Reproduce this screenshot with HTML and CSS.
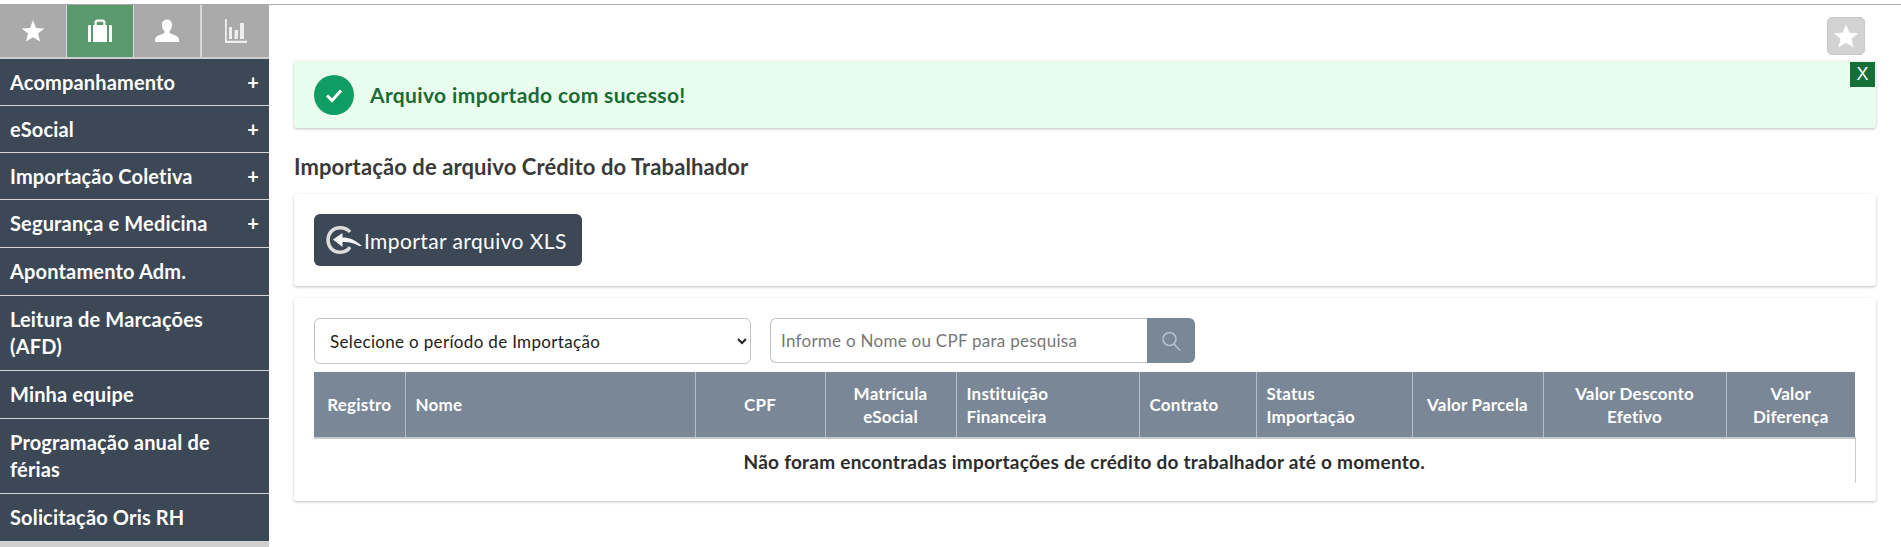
FILE: index.html
```html
<!DOCTYPE html>
<html lang="pt-BR">
<head>
  <meta charset="UTF-8" />
  <title>Importação de arquivo Crédito do Trabalhador</title>
  <link rel="stylesheet" href="styles.css">
</head>
<body>
  <div class="page">
    <aside class="sidebar">
      <div class="tabs">
        <div class="tab">
          <svg width="24" height="24" viewBox="0 0 24 24"><path fill="#fff" d="M12 1.200l3.100 7.700 8.200.5-6.300 5.200 2 8-7-4.400-7 4.400 2-8L.7 9.400l8.200-.5z"/></svg>
        </div>
        <div class="tab tab-active">
          <svg width="24" height="24" viewBox="0 0 24 24"><path fill="#fff" d="M0 7.500c0-.8.5-1.400 1.200-1.400H3v17H1.200C.5 23.100 0 22.500 0 21.700zM5 6.100h1.500V3.400C6.500 1.700 7.700.5 9.400.5h5.200c1.700 0 2.900 1.200 2.900 2.900v2.700H19v17H5zm3.700 0h6.600V3.700c0-.6-.4-1-1-1H9.700c-.6 0-1 .4-1 1zM21 6.100h1.800c.7 0 1.200.6 1.200 1.400v14.200c0 .8-.5 1.400-1.200 1.400H21z"/></svg>
        </div>
        <div class="tab">
          <svg width="24" height="24" viewBox="0 0 24 24"><path fill="#fff" d="M12 .5c3.200 0 5 2.300 5 5.500 0 2.400-.9 4.700-2.200 6-.6.600-.5 1.700.3 2.200 2.700 1.500 8.900 2.500 8.900 6.600v2.200H0v-2.200c0-4.100 6.200-5.100 8.900-6.600.8-.5.9-1.600.3-2.200C7.900 10.700 7 8.400 7 6c0-3.200 1.800-5.500 5-5.500z"/></svg>
        </div>
        <div class="tab">
          <svg width="22" height="24" viewBox="0 0 22 24"><path fill="#eee" d="M0 0h1.800v21.800H22V24H0zM4 8h3v12H4zM9.500 11H13v9H9.500zM15 4h4v16h-4z"/></svg>
        </div>
      </div>
      <nav class="menu">
        <a class="menu-item menu-item-short">Acompanhamento<span class="plus">+</span></a>
        <a class="menu-item menu-item-short">eSocial<span class="plus">+</span></a>
        <a class="menu-item menu-item-short">Importação Coletiva<span class="plus">+</span></a>
        <a class="menu-item">Segurança e Medicina<span class="plus">+</span></a>
        <a class="menu-item">Apontamento Adm.</a>
        <a class="menu-item">Leitura de Marcações (AFD)</a>
        <a class="menu-item">Minha equipe</a>
        <a class="menu-item">Programação anual de férias</a>
        <a class="menu-item">Solicitação Oris RH</a>
      </nav>
    </aside>

    <main class="content">
      <div class="toolbar">
        <button class="fav-button">
          <svg width="26" height="26" viewBox="0 0 24 24"><path fill="#fff" d="M12 1.200l3.100 7.700 8.200.5-6.300 5.200 2 8-7-4.400-7 4.400 2-8L.7 9.400l8.200-.5z"/></svg>
        </button>
      </div>

      <div class="alert">
        <span class="alert-icon">
          <svg width="22" height="22" viewBox="0 0 22 22"><path fill="none" stroke="#fff" stroke-width="3" d="M4 11.500l5 5 9-10"/></svg>
        </span>
        <span class="alert-text">Arquivo importado com sucesso!</span>
        <button class="alert-close">X</button>
      </div>

      <h2 class="title">Importação de arquivo Crédito do Trabalhador</h2>

      <section class="card card-import">
        <button class="import-button">
          <svg width="36" height="28" viewBox="0 0 36 28"><path fill="none" stroke="#dcdcdc" stroke-width="3.500" d="M24 6C21.500 3 18 1.800 14 1.800 7 1.800 2 7 2 14s5 12.200 12 12.200c4 0 8-1.700 10-5"/><path fill="#f4f4f4" d="M7 13.500L16.500 7v4.500c7 0 12 2 19.500 8.500h-3c-5-3-10-4.300-16.500-4V21z"/></svg>
          Importar arquivo XLS
        </button>
      </section>

      <section class="card card-list">
        <div class="filters">
          <select class="period-select">
            <option>Selecione o período de Importação</option>
          </select>
          <div class="search">
            <input class="search-input" type="text" placeholder="Informe o Nome ou CPF para pesquisa">
            <button class="search-button">
              <svg width="22" height="22" viewBox="0 0 22 22"><circle cx="9.500" cy="9" r="6.500" fill="none" stroke="#b9c2cc" stroke-width="1.500"/><path fill="none" stroke="#b9c2cc" stroke-width="1.500" d="M14 14l6 6.500"/></svg>
            </button>
          </div>
        </div>
        <table class="grid">
          <thead>
            <tr>
              <th class="col-registro">Registro</th>
              <th class="col-nome left">Nome</th>
              <th class="col-cpf">CPF</th>
              <th class="col-matricula">Matrícula eSocial</th>
              <th class="col-instituicao left">Instituição<br>Financeira</th>
              <th class="col-contrato left">Contrato</th>
              <th class="col-status left">Status<br>Importação</th>
              <th class="col-parcela">Valor Parcela</th>
              <th class="col-desconto">Valor Desconto Efetivo</th>
              <th class="col-diferenca">Valor Diferença</th>
            </tr>
          </thead>
          <tbody>
            <tr>
              <td class="empty" colspan="10">Não foram encontradas importações de crédito do trabalhador até o momento.</td>
            </tr>
          </tbody>
        </table>
      </section>
    </main>
  </div>
</body>
</html>
```

FILE: styles.css
```css
:root {
  --slate: #3c4856;
  --header: #7a8797;
  --ui-font: 'Lato', 'Liberation Sans', sans-serif;
}

* {
  box-sizing: border-box;
  margin: 0;
  padding: 0;
}

html, body {
  height: 100%;
  overflow: hidden;
}

body {
  padding-top: 4px;
  background: #fff;
  font-family: var(--ui-font);
  color: #3a3a3a;
}

.page {
  display: flex;
  height: 100%;
  border-top: 1px solid #aaa;
}

/* sidebar */
.sidebar {
  width: 269px;
  flex-shrink: 0;
  background: #cfcfcf;
}

.tabs {
  display: flex;
  height: 52px;
  margin-bottom: 2px;
  background: #aaa;
}

.tab {
  width: 67px;
  display: flex;
  align-items: center;
  justify-content: center;
  border-right: 1px solid #d8d8d8;
}

.tab:last-child {
  border-right: none;
}

.tab:nth-child(3) {
  width: 68px;
  border-right-width: 2px;
}

.tab-active {
  background: #5a9a6e;
}

.menu-item {
  display: flex;
  justify-content: space-between;
  padding: 10px 10px;
  background: var(--slate);
  border-bottom: 1px solid #d5d5d5;
  color: #fff;
  font-size: 20px;
  font-weight: 700;
  letter-spacing: 0.16px;
  line-height: 27px;
}

.menu-item-short {
  padding-bottom: 9px;
}

.plus {
  font-size: 20px;
}

/* main area */
.content {
  flex: 1;
  padding: 0 25px;
}

.toolbar {
  display: flex;
  justify-content: flex-end;
  padding: 12px 11px 6px 0;
}

.fav-button {
  width: 38px;
  height: 38px;
  display: flex;
  align-items: center;
  justify-content: center;
  background: #d3d3d3;
  border: 1px solid #c8c8c8;
  border-radius: 5px;
}

.alert {
  position: relative;
  display: flex;
  align-items: center;
  gap: 16px;
  height: 67px;
  padding-left: 20px;
  background: #e9fdef;
  border-radius: 3px;
  box-shadow: 0 1px 3px rgba(0, 0, 0, 0.25);
}

.alert-icon {
  width: 40px;
  height: 40px;
  display: flex;
  align-items: center;
  justify-content: center;
  background: #0f9d63;
  border-radius: 50%;
}

.alert-text {
  color: #1a6b35;
  font-size: 21px;
  font-weight: 700;
  letter-spacing: 0.36px;
}

.alert-close {
  position: absolute;
  top: 1px;
  right: 1px;
  width: 25px;
  height: 25px;
  background: #157038;
  border: none;
  color: #fff;
  font-family: 'Liberation Sans', sans-serif;
  font-size: 18px;
}

.title {
  margin-top: 26px;
  font-size: 22px;
  font-weight: 700;
  letter-spacing: 0.1px;
  line-height: 26px;
}

.card {
  background: #fff;
  border-radius: 3px;
  box-shadow: 0 1px 3px rgba(0, 0, 0, 0.25);
}

.card-import {
  margin-top: 14px;
  height: 92px;
  padding: 20px;
}

.import-button {
  display: flex;
  align-items: center;
  gap: 2px;
  width: 268px;
  height: 52px;
  padding-left: 12px;
  background: var(--slate);
  border: none;
  border-radius: 6px;
  color: #fff;
  font-family: var(--ui-font);
  font-size: 21px;
  letter-spacing: 0.4px;
}

.card-list {
  margin-top: 12px;
  height: 203px;
  padding: 20px;
}

.filters {
  display: flex;
  gap: 19px;
  height: 54px;
}

.period-select {
  width: 437px;
  height: 46px;
  padding-left: 11px;
  background: #fff;
  border: 1px solid #c4c4c4;
  border-radius: 6px;
  color: #222;
  font-family: var(--ui-font);
  font-size: 17px;
  letter-spacing: 0.33px;
}

.search {
  display: flex;
  height: 45px;
}

.search-input {
  width: 377px;
  padding-left: 10px;
  border: 1px solid #c4c4c4;
  border-right: none;
  border-radius: 6px 0 0 6px;
  font-family: var(--ui-font);
  font-size: 17px;
  letter-spacing: 0.27px;
}

.search-input::placeholder {
  color: #777;
}

.search-button {
  width: 48px;
  display: flex;
  align-items: center;
  justify-content: center;
  background: var(--header);
  border: none;
  border-radius: 0 6px 6px 0;
}

.grid {
  width: 1541px;
  table-layout: fixed;
  border-collapse: collapse;
}

.grid th {
  height: 66px;
  padding: 0 10px;
  background: var(--header);
  border-right: 1px solid #b5bdc6;
  border-bottom: 2px solid #c4c9cf;
  color: #fff;
  font-size: 17px;
  font-weight: 700;
  letter-spacing: 0.2px;
  line-height: 23px;
  text-align: center;
}

.grid th:last-child {
  border-right: none;
}

.grid th.left {
  text-align: left;
}

.col-registro { width: 91px; }
.col-nome { width: 290px; }
.col-cpf { width: 130px; }
.col-matricula { width: 131px; }
.col-instituicao { width: 183px; }
.col-contrato { width: 117px; }
.col-status { width: 156px; }
.col-parcela { width: 131px; }
.col-desconto { width: 183px; }
.col-diferenca { width: 129px; }

.empty {
  height: 45px;
  border-right: 1px solid #ccc;
  color: #2c2c2c;
  font-size: 19px;
  font-weight: 700;
  letter-spacing: 0.25px;
  text-align: center;
}
```
